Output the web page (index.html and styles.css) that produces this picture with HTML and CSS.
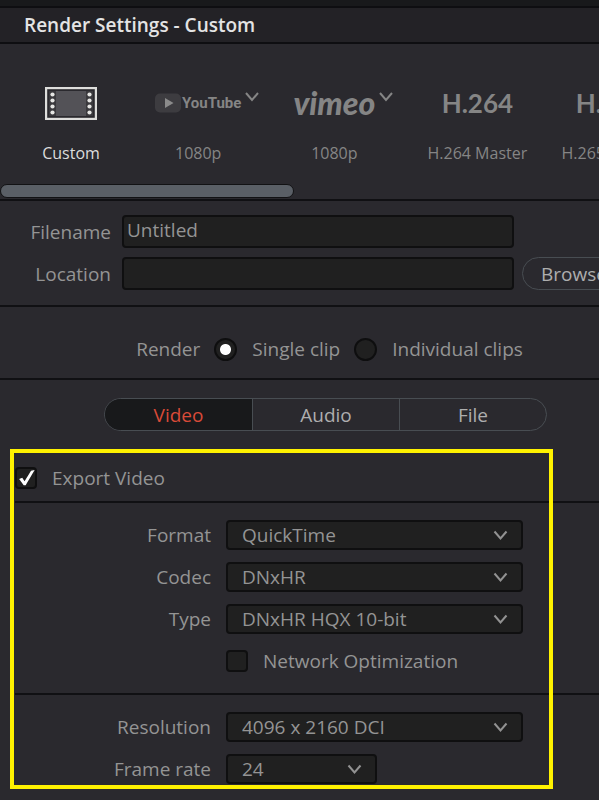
FILE: index.html
```html
<!DOCTYPE html>
<html lang="en">
<head>
<meta charset="utf-8">
<meta name="viewport" content="width=device-width, initial-scale=1">
<title>Render Settings</title>
<link rel="stylesheet" href="styles.css">
</head>
<body>
<main class="panel">
  <header class="title-bar"><h1>Render Settings - Custom</h1></header>

  <section class="presets">
    <div class="preset-list">
      <button class="preset preset-active" type="button">
        <span class="logo"><svg width="52" height="33" viewBox="0 0 52 33" aria-hidden="true">
          <rect x="1" y="1" width="50" height="31" fill="#2a292e" stroke="#dededc" stroke-width="2.4"/>
          <rect x="4" y="4" width="44" height="25" fill="#3a393d"/>
          <rect x="11" y="4" width="30" height="25" fill="#535257"/>
          <g fill="#e6e6e4">
            <circle cx="7.5" cy="7.5" r="2.1"/><circle cx="7.5" cy="13.5" r="2.1"/><circle cx="7.5" cy="19.5" r="2.1"/><circle cx="7.5" cy="25.5" r="2.1"/>
            <circle cx="44.5" cy="7.5" r="2.1"/><circle cx="44.5" cy="13.5" r="2.1"/><circle cx="44.5" cy="19.5" r="2.1"/><circle cx="44.5" cy="25.5" r="2.1"/>
          </g>
        </svg></span>
        <span class="preset-name">Custom</span>
      </button>
      <button class="preset preset-menu" type="button">
        <span class="logo"><svg width="26" height="20" viewBox="0 0 26 20" aria-hidden="true">
          <rect width="26" height="19" y=".5" rx="5" fill="#3d3c40"/><path d="M10 5l8.500 5-8.500 5z" fill="#8b8b8b"/>
        </svg><span class="youtube">YouTube</span></span>
        <svg class="arrow" width="14" height="10" viewBox="0 0 14 10" aria-hidden="true"><path d="M1 1l6 7 6-7"/></svg>
        <span class="preset-name">1080p</span>
      </button>
      <button class="preset preset-menu" type="button">
        <span class="logo"><span class="vimeo">vimeo</span></span>
        <svg class="arrow" width="14" height="10" viewBox="0 0 14 10" aria-hidden="true"><path d="M1 1l6 7 6-7"/></svg>
        <span class="preset-name">1080p</span>
      </button>
      <button class="preset" type="button">
        <span class="logo codec">H.264</span>
        <span class="preset-name">H.264 Master</span>
      </button>
      <button class="preset" type="button">
        <span class="logo codec">H.265</span>
        <span class="preset-name">H.265 Master</span>
      </button>
    </div>
    <div class="scroll-thumb"></div>
  </section>

  <section class="destination">
    <label for="filename">Filename</label>
    <input id="filename" type="text" value="Untitled">
    <label class="second" for="location">Location</label>
    <input id="location" type="text">
    <button class="browse" type="button">Browse</button>
  </section>

  <section class="render-mode" role="radiogroup" aria-labelledby="render-label">
    <span id="render-label">Render</span>
    <label><input type="radio" name="mode" checked>Single clip</label>
    <label><input type="radio" name="mode">Individual clips</label>
  </section>

  <nav class="tabs">
    <button class="tab tab-active" type="button">Video</button>
    <button class="tab" type="button">Audio</button>
    <button class="tab" type="button">File</button>
  </nav>

  <div class="video-settings">
    <div class="export-row">
      <input class="check" id="export" type="checkbox" checked>
      <label for="export">Export Video</label>
    </div>
    <section class="fields">
      <label for="format">Format</label>
      <div class="dropdown"><select id="format"><option>QuickTime</option></select><svg class="chevron" width="15" height="11" viewBox="0 0 15 11" aria-hidden="true"><path d="M1.500 1.500l6 7 6-7"/></svg></div>
      <label for="codec">Codec</label>
      <div class="dropdown"><select id="codec"><option>DNxHR</option></select><svg class="chevron" width="15" height="11" viewBox="0 0 15 11" aria-hidden="true"><path d="M1.500 1.500l6 7 6-7"/></svg></div>
      <label for="type">Type</label>
      <div class="dropdown"><select id="type"><option>DNxHR HQX 10-bit</option></select><svg class="chevron" width="15" height="11" viewBox="0 0 15 11" aria-hidden="true"><path d="M1.500 1.500l6 7 6-7"/></svg></div>
      <div class="option">
        <input class="check" id="network" type="checkbox">
        <label for="network">Network Optimization</label>
      </div>
    </section>
    <section class="fields">
      <label for="resolution">Resolution</label>
      <div class="dropdown"><select id="resolution"><option>4096 x 2160 DCI</option></select><svg class="chevron" width="15" height="11" viewBox="0 0 15 11" aria-hidden="true"><path d="M1.500 1.500l6 7 6-7"/></svg></div>
      <label for="rate">Frame rate</label>
      <div class="dropdown short"><select id="rate"><option>24</option></select><svg class="chevron" width="15" height="11" viewBox="0 0 15 11" aria-hidden="true"><path d="M1.500 1.500l6 7 6-7"/></svg></div>
    </section>
    <div class="highlight"></div>
  </div>
</main>
</body>
</html>
```
FILE: styles.css
```css
* {
  box-sizing: border-box;
}

body {
  margin: 0;
  background: #2a292e;
  color: #949494;
  font: 19px/24px "Open Sans", "Noto Sans", sans-serif;
}

button,
input,
select {
  margin: 0;
  color: inherit;
  font: inherit;
}

.panel {
  min-height: 100vh;
  overflow: hidden;
  border-top: 6px solid #18191b;
}

.title-bar {
  padding: 5px 24px;
  border: solid #0e0e11;
  border-width: 2px 0;
  background: #232226;
}

h1 {
  margin: 0;
  color: #e4e4e4;
  font-size: 19px;
  font-weight: 600;
  line-height: 24px;
}

.presets {
  padding: 36px 0 1px;
  border-bottom: 2px solid #101013;
}

.preset-list {
  display: flex;
  gap: 34px;
  padding-left: 21px;
}

.preset {
  display: grid;
  flex: none;
  grid-template-rows: 46px 24px;
  row-gap: 15px;
  justify-items: center;
  min-width: 100px;
  padding: 0;
  border: 0;
  background: none;
  color: #858585;
  font-size: 16px;
}

.preset-active {
  color: #dcdcdc;
}

.preset-menu {
  grid-template-columns: auto auto;
  column-gap: 4px;
}

.logo {
  display: flex;
  align-items: center;
  gap: 1px;
}

.youtube {
  font: bold 15px/24px Roboto, sans-serif;
}

.vimeo {
  font: italic 900 32px/32px Lato, sans-serif;
}

.codec {
  font: bold 26px/32px Lato, sans-serif;
}

.arrow {
  margin-top: 12px;
  fill: none;
  stroke: #858585;
  stroke-width: 2;
}

.preset-name {
  grid-column: 1;
  white-space: nowrap;
}

.scroll-thumb {
  width: 49%;
  height: 14px;
  margin-top: 19px;
  border: 1px solid #121214;
  border-radius: 7px;
  background: #5a5f66;
}

.destination {
  display: grid;
  grid-template-columns: 114px minmax(0, 1fr) 77px;
  grid-auto-rows: 33px;
  gap: 9px 8px;
  align-items: center;
  padding: 14px 0 15px;
  border-bottom: 2px solid #101013;
}

.destination label {
  padding-right: 3px;
  text-align: right;
}

.fields > label {
  text-align: right;
}

.second {
  grid-column: 1;
}

input[type="text"] {
  width: 100%;
  height: 33px;
  padding: 0 4px 4px 3px;
  border: 2px solid #0f0f10;
  border-radius: 4px;
  background: #202020;
}

.browse {
  width: 104px;
  height: 33px;
  padding: 0;
  border: 1px solid #484d52;
  border-radius: 17px;
  background: none;
  color: #aeaeae;
}

.render-mode {
  display: flex;
  justify-content: center;
  gap: 14px;
  padding: 30px 0 17px 60px;
  border-bottom: 2px solid #101013;
}

.render-mode label {
  display: flex;
  align-items: center;
  gap: 15px;
}

input[type="radio"] {
  width: 23px;
  height: 23px;
  border: 2px solid #0e0e0f;
  border-radius: 50%;
  background: #202020;
  appearance: none;
}

input[type="radio"]:checked {
  background: radial-gradient(circle, #fff 5px, #202020 6px);
}

.tabs {
  display: grid;
  grid-template-columns: repeat(3, 1fr);
  margin: 18px 52px 18px 104px;
  overflow: hidden;
  border: 1px solid #484d52;
  border-radius: 17px;
}

.tab {
  height: 31px;
  padding: 0;
  border: 0;
  border-left: 1px solid #484d52;
  background: none;
  color: #aeaeae;
}

.tab-active {
  border-left: 0;
  background: #18191b;
  color: #d84a38;
}

.video-settings {
  position: relative;
  padding: 0 0 16px 15px;
}

.highlight {
  position: absolute;
  inset: 0 46px 11px 10px;
  border: 4px solid #fff200;
  pointer-events: none;
}

.export-row {
  display: flex;
  align-items: center;
  gap: 15px;
  padding: 17px 0 11px;
  border-bottom: 2px solid #101013;
}

.check {
  display: grid;
  width: 22px;
  height: 22px;
  border: 2px solid #0f0f10;
  border-radius: 4px;
  background: #202020;
  appearance: none;
}

.check:checked::before {
  content: "";
  background: #fff;
  clip-path: polygon(12% 55%, 29% 48%, 42% 68%, 78% 10%, 98% 6%, 48% 90%, 37% 90%);
}

.fields {
  display: grid;
  grid-template-columns: 196px minmax(0, 1fr);
  gap: 12px 15px;
  align-items: center;
  padding: 17px 76px 17px 0;
}

.fields + .fields {
  padding-bottom: 0;
  border-top: 2px solid #101013;
}

.dropdown {
  display: grid;
  align-items: center;
}

.dropdown select,
.chevron {
  grid-area: 1 / 1;
}

.dropdown select {
  width: 100%;
  height: 30px;
  padding: 0 32px 0 14px;
  border: 2px solid #0f0f10;
  border-radius: 4px;
  background: #202020;
  appearance: none;
}

.chevron {
  justify-self: end;
  margin-right: 15px;
  fill: none;
  stroke: #929292;
  stroke-width: 2;
  pointer-events: none;
}

.short {
  width: 151px;
}

.option {
  display: flex;
  grid-column: 2;
  align-items: center;
  gap: 15px;
  height: 30px;
}
```
